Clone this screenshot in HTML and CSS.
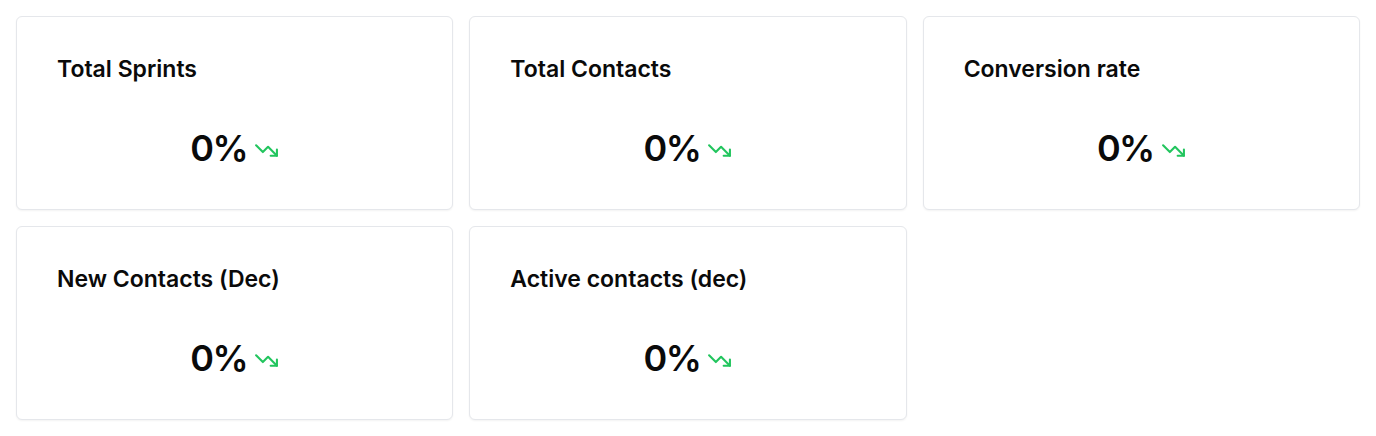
FILE: index.html
```html
<!DOCTYPE html>
<html lang="en">
<head>
<meta charset="utf-8">
<title>Stats</title>
<link rel="stylesheet" href="styles.css">
</head>
<body>
<main class="grid">
  <div class="card">
    <h3 class="card-title">Total Sprints</h3>
    <div class="card-value"><span class="num">0%</span><svg class="trend" viewBox="0 0 24 24" fill="none" stroke="currentColor" stroke-width="2" stroke-linecap="round" stroke-linejoin="round"><polyline points="22 17 13.5 8.5 8.5 13.5 2 7"/><polyline points="16 17 22 17 22 11"/></svg></div>
  </div>
  <div class="card">
    <h3 class="card-title">Total Contacts</h3>
    <div class="card-value"><span class="num">0%</span><svg class="trend" viewBox="0 0 24 24" fill="none" stroke="currentColor" stroke-width="2" stroke-linecap="round" stroke-linejoin="round"><polyline points="22 17 13.5 8.5 8.5 13.5 2 7"/><polyline points="16 17 22 17 22 11"/></svg></div>
  </div>
  <div class="card">
    <h3 class="card-title">Conversion rate</h3>
    <div class="card-value"><span class="num">0%</span><svg class="trend" viewBox="0 0 24 24" fill="none" stroke="currentColor" stroke-width="2" stroke-linecap="round" stroke-linejoin="round"><polyline points="22 17 13.5 8.5 8.5 13.5 2 7"/><polyline points="16 17 22 17 22 11"/></svg></div>
  </div>
  <div class="card">
    <h3 class="card-title">New Contacts (Dec)</h3>
    <div class="card-value"><span class="num">0%</span><svg class="trend" viewBox="0 0 24 24" fill="none" stroke="currentColor" stroke-width="2" stroke-linecap="round" stroke-linejoin="round"><polyline points="22 17 13.5 8.5 8.5 13.5 2 7"/><polyline points="16 17 22 17 22 11"/></svg></div>
  </div>
  <div class="card">
    <h3 class="card-title">Active contacts (dec)</h3>
    <div class="card-value"><span class="num">0%</span><svg class="trend" viewBox="0 0 24 24" fill="none" stroke="currentColor" stroke-width="2" stroke-linecap="round" stroke-linejoin="round"><polyline points="22 17 13.5 8.5 8.5 13.5 2 7"/><polyline points="16 17 22 17 22 11"/></svg></div>
  </div>
</main>
</body>
</html>
```

FILE: styles.css
```css
* { box-sizing: border-box; }
html, body { margin: 0; background: #ffffff; }
body {
  font-family: Inter, "Noto Sans", sans-serif;
  color: #0a0a0a;
  padding: 16px;
}
.grid {
  display: grid;
  grid-template-columns: repeat(3, 1fr);
  gap: 16px;
}
.card {
  border: 1px solid #e5e7eb;
  border-radius: 6px;
  box-shadow: 0 1px 2px rgba(0, 0, 0, 0.05);
  padding: 38px 40px 41px;
  background: #fff;
}
.card-title {
  margin: 0;
  font-size: 23px;
  line-height: 28px;
  font-weight: 600;
}
.card-value {
  margin-top: 45px;
  display: flex;
  justify-content: center;
  align-items: center;
  gap: 7px;
}
.num {
  font-size: 36px;
  line-height: 40px;
  font-weight: 600;
  letter-spacing: -1.5px;
}
.trend {
  width: 25px;
  height: 25px;
  color: #22c55e;
  margin-top: 4px;
}
```
